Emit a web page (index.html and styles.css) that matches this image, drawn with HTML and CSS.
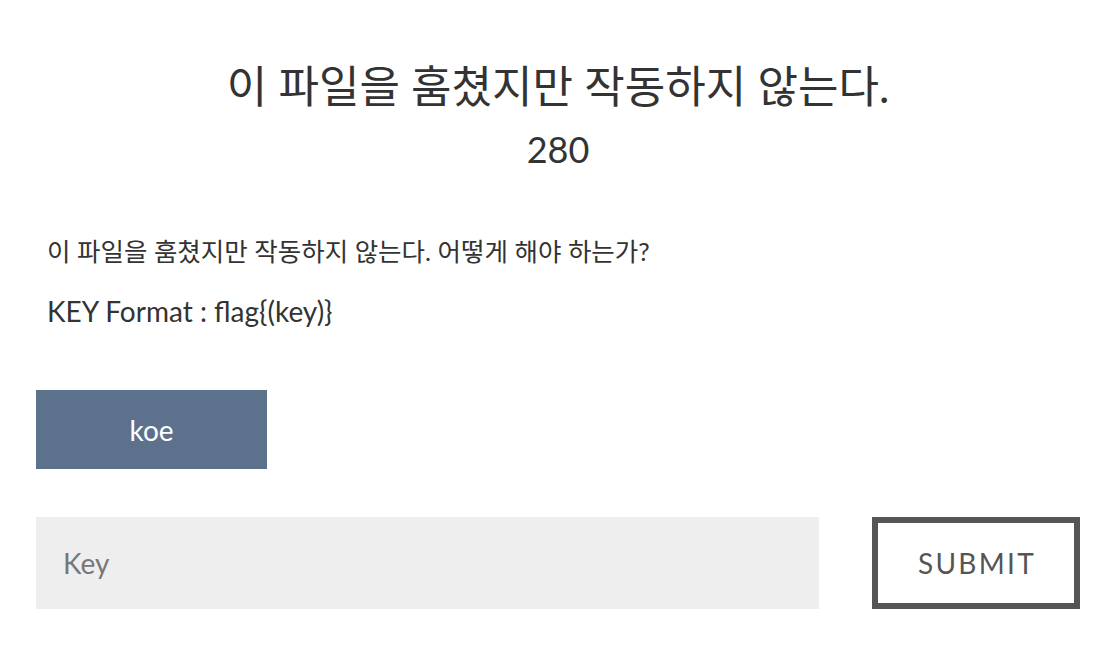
FILE: index.html
```html
<!DOCTYPE html>
<html lang="ko">
<head>
<meta charset="utf-8">
<link rel="stylesheet" href="styles.css">
</head>
<body>
<div class="modal">
  <h2 class="name">이 파일을 훔쳤지만 작동하지 않는다.</h2>
  <h3 class="value">280</h3>
  <div class="desc">
    <p class="desc-ko">이 파일을 훔쳤지만 작동하지 않는다. 어떻게 해야 하는가?</p>
    <p class="desc-en">KEY Format : flag{(key)}</p>
  </div>
  <div class="files">
    <a class="file-btn">koe</a>
  </div>
  <div class="submit-row">
    <input class="key-input" type="text" placeholder="Key">
    <button class="submit-btn">SUBMIT</button>
  </div>
</div>
</body>
</html>
```
FILE: styles.css
```css
html, body {
  margin: 0;
  padding: 0;
  background: #fff;
}
body {
  font-family: Lato, "Noto Sans CJK KR", sans-serif;
  color: #333;
}
.modal {
  padding: 0 18px 0 36px;
}
.name {
  margin: 0;
  padding-top: 54px;
  text-align: center;
  font-size: 44px;
  font-weight: 400;
  line-height: 64px;
}
.value {
  margin: 6px 0 0;
  text-align: center;
  font-size: 36px;
  font-weight: 400;
  line-height: 50px;
}
.desc {
  padding: 57px 11px 0;
  line-height: 40px;
}
.desc p {
  margin: 0 0 20px;
}
.desc-ko {
  font-size: 25.5px;
}
.desc-en {
  font-size: 28px;
}
.files {
  padding-top: 39px;
  display: flex;
}
.file-btn {
  display: flex;
  align-items: center;
  justify-content: center;
  width: 231px;
  height: 79px;
  background: #5b718c;
  color: #fff;
  font-size: 28px;
  text-decoration: none;
}
.submit-row {
  margin-top: 48px;
  display: flex;
  justify-content: space-between;
}
.key-input {
  width: 783px;
  height: 92px;
  box-sizing: border-box;
  border: none;
  background: #eeeeee;
  padding: 0 27px;
  font-family: Lato, sans-serif;
  font-size: 28px;
  color: #555;
  outline: none;
}
.key-input::placeholder {
  color: #777;
}
.submit-btn {
  width: 208px;
  height: 92px;
  box-sizing: border-box;
  border: 6px solid #555;
  background: #fff;
  color: #555;
  font-family: Lato, sans-serif;
  font-size: 28px;
  letter-spacing: 2.3px;
  padding: 0 0 0 2px;
}
```
